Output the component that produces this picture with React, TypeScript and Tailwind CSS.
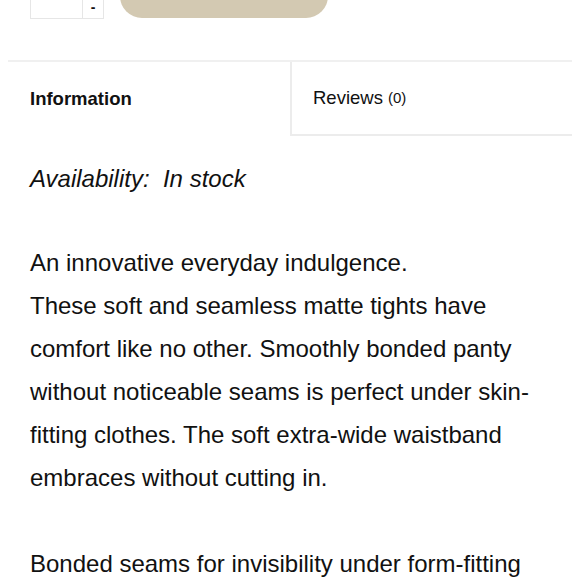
export default function App() {
    return (
        <div className="w-[580px] h-[580px] overflow-hidden bg-white text-[#111] font-['Liberation_Sans',Arial,sans-serif]">
            {/* Quantity + add to cart (cut off at top) */}
            <div className="flex items-end pl-[30px] -mt-[32px]">
                <div className="flex h-[40px] border border-[#e6e6e6] -mb-[1px]">
                    <div className="w-[51px]" />
                    <div className="w-[21px] border-l border-[#e6e6e6] flex items-end justify-center pb-[6px] text-[14px] font-bold leading-[10px]">
                        -
                    </div>
                </div>
                <div className="ml-[16px] w-[208px] h-[50px] rounded-[22px] bg-[#d3c9b2]" />
            </div>

            {/* Tabs */}
            <div className="mx-[8px] mt-[42px] grid grid-cols-2 border-t-2 border-[#f0f0f0] h-[76px]">
                <div className="flex items-center pl-[22px] text-[18.5px] font-bold">Information</div>
                <div className="flex items-center pl-[21px] border-l-2 border-b-2 border-[#ececec] text-[18.5px]">
                    Reviews<span className="ml-[5px] text-[15px]">(0)</span>
                </div>
            </div>

            {/* Content */}
            <div className="px-[30px] text-[24px] leading-[43px]">
                <p className="mt-[21px] italic">Availability:&nbsp; In stock</p>
                <p className="mt-[41px]">
                    An innovative everyday indulgence.
                    <br />
                    These soft and seamless matte tights have comfort like no other. Smoothly bonded panty without noticeable seams is perfect under skin-fitting clothes. The soft extra-wide waistband embraces without cutting in.
                    <br />
                    <br />
                    Bonded seams for invisibility under form-fitting
                </p>
            </div>
        </div>
    );
}
